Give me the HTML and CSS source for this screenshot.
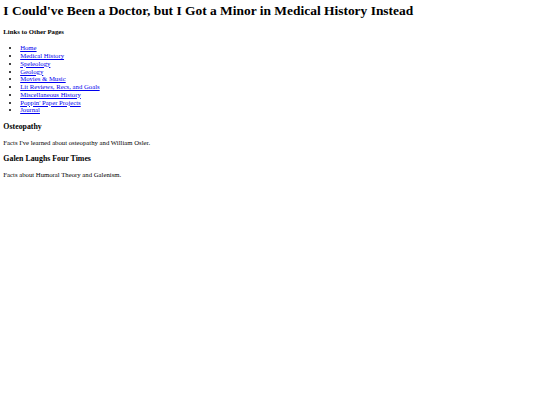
FILE: index.html
```html
<!DOCTYPE html>
<html>
<head>
<meta charset="utf-8">
<title>I Could've Been a Doctor, but I Got a Minor in Medical History Instead</title>
<link rel="stylesheet" href="styles.css">
</head>
<body class="page">
<h1 class="title">I Could've Been a Doctor, but I Got a Minor in Medical History Instead</h1>
<h4 class="nav-heading">Links to Other Pages</h4>
<ul class="nav-list">
<li><a class="nav-link" href="#">Home</a></li>
<li><a class="nav-link" href="#">Medical History</a></li>
<li><a class="nav-link" href="#">Speleology</a></li>
<li><a class="nav-link" href="#">Geology</a></li>
<li><a class="nav-link" href="#">Movies &amp; Music</a></li>
<li><a class="nav-link" href="#">Lit Reviews, Recs, and Goals</a></li>
<li><a class="nav-link" href="#">Miscellaneous History</a></li>
<li><a class="nav-link" href="#">Poppin' Paper Projects</a></li>
<li><a class="nav-link" href="#">Journal</a></li>
</ul>
<h3 class="section-heading">Osteopathy</h3>
<p class="section-text">Facts I've learned about osteopathy and William Osler.</p>
<h3 class="section-heading">Galen Laughs Four Times</h3>
<p class="section-text">Facts about Humoral Theory and Galenism.</p>
</body>
</html>
```
FILE: styles.css
```css
html {
  background: #ffffff;
}
.page {
  margin: 3.36px;
  font-family: "Liberation Serif", "Times New Roman", serif;
  font-size: 6.72px;
  line-height: 1.15;
  color: #000000;
}
.title {
  font-size: 13.44px;
  font-weight: bold;
  margin: 0 0 9px 0;
}
.nav-heading {
  font-size: 6.72px;
  font-weight: bold;
  margin: 8.94px 0;
}
.nav-list {
  margin: 6.72px 0;
  padding-left: 16.8px;
  list-style: disc;
}
.nav-link {
  color: #0000ee;
  text-decoration: underline;
}
.section-heading {
  font-size: 7.86px;
  font-weight: bold;
  margin: 7.86px 0;
}
.section-text {
  margin: 6.72px 0;
}
```
